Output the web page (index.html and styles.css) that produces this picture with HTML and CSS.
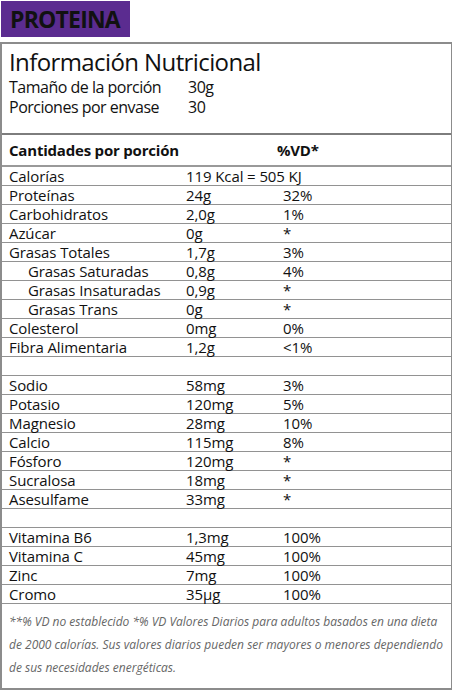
FILE: index.html
```html
<!DOCTYPE html>
<html lang="es">
<head>
    <meta charset="UTF-8">
    <meta name="viewport" content="width=device-width, initial-scale=1.0">
    <title>Proteina - Información Nutricional</title>
    <link rel="stylesheet" href="styles.css">
</head>
<body>
    <div class="product-tag">PROTEINA</div>

    <div class="label">
        <div class="label-head">
            <h1>Información Nutricional</h1>
            <div class="serving"><span>Tamaño de la porción</span><span>30g</span></div>
            <div class="serving"><span>Porciones por envase</span><span>30</span></div>
        </div>

        <div class="row row-header">
            <span>Cantidades por porción</span>
            <span class="vd-head">%VD*</span>
        </div>

        <div class="row"><span>Calorías</span><span class="wide">119 Kcal = 505 KJ</span></div>
        <div class="row"><span>Proteínas</span><span>24g</span><span>32%</span></div>
        <div class="row"><span>Carbohidratos</span><span>2,0g</span><span>1%</span></div>
        <div class="row"><span>Azúcar</span><span>0g</span><span>*</span></div>
        <div class="row"><span>Grasas Totales</span><span>1,7g</span><span>3%</span></div>
        <div class="row sub"><span>Grasas Saturadas</span><span>0,8g</span><span>4%</span></div>
        <div class="row sub"><span>Grasas Insaturadas</span><span>0,9g</span><span>*</span></div>
        <div class="row sub"><span>Grasas Trans</span><span>0g</span><span>*</span></div>
        <div class="row"><span>Colesterol</span><span>0mg</span><span>0%</span></div>
        <div class="row"><span>Fibra Alimentaria</span><span>1,2g</span><span>&lt;1%</span></div>
        <div class="row empty"></div>

        <div class="row"><span>Sodio</span><span>58mg</span><span>3%</span></div>
        <div class="row"><span>Potasio</span><span>120mg</span><span>5%</span></div>
        <div class="row"><span>Magnesio</span><span>28mg</span><span>10%</span></div>
        <div class="row"><span>Calcio</span><span>115mg</span><span>8%</span></div>
        <div class="row"><span>Fósforo</span><span>120mg</span><span>*</span></div>
        <div class="row"><span>Sucralosa</span><span>18mg</span><span>*</span></div>
        <div class="row"><span>Asesulfame</span><span>33mg</span><span>*</span></div>
        <div class="row empty"></div>

        <div class="row"><span>Vitamina B6</span><span>1,3mg</span><span>100%</span></div>
        <div class="row"><span>Vitamina C</span><span>45mg</span><span>100%</span></div>
        <div class="row"><span>Zinc</span><span>7mg</span><span>100%</span></div>
        <div class="row"><span>Cromo</span><span>35µg</span><span>100%</span></div>

        <p class="footnote">**% VD no establecido *% VD Valores Diarios para adultos basados en una dieta de 2000 calorías. Sus valores diarios pueden ser mayores o menores dependiendo de sus necesidades energéticas.</p>
    </div>
</body>
</html>
```

FILE: styles.css
```css
body {
    margin: 0;
    padding: 0;
    background-color: #ffffff;
    font-family: "Open Sans", "Noto Sans", sans-serif;
    color: #111111;
}

.product-tag {
    width: 129px;
    height: 36px;
    margin: 1px 0 0 1px;
    background-color: #5b2c90;
    font-size: 23px;
    font-weight: bold;
    line-height: 36px;
    padding-left: 9px;
    box-sizing: border-box;
    letter-spacing: -0.8px;
}

.label {
    margin-top: 5px;
    width: 452px;
    height: 648px;
    box-sizing: border-box;
    border: 2px solid #8c8c8c;
    border-right-width: 1px;
}

.label-head {
    padding: 3px 7px 0;
    height: 86px;
    border-bottom: 2px solid #7d7d7d;
}

.label-head h1 {
    margin: 0;
    font-size: 24px;
    font-weight: normal;
    line-height: 30px;
    letter-spacing: -0.6px;
}

.serving {
    display: grid;
    grid-template-columns: 179px 1fr;
    font-size: 16px;
    line-height: 20px;
    letter-spacing: -0.5px;
}

.row {
    display: grid;
    grid-template-columns: 177px 97px 1fr;
    height: 19px;
    padding-left: 7px;
    border-bottom: 1px solid #929292;
    font-size: 15px;
    line-height: 18px;
    letter-spacing: -0.1px;
    box-sizing: border-box;
}

.row .wide {
    grid-column: 2 / 4;
}

.row.sub span:first-child {
    padding-left: 19px;
}

.row-header {
    height: 32px;
    line-height: 30px;
    font-weight: bold;
    font-size: 15px;
    letter-spacing: -0.2px;
    border-bottom: 2px solid #999999;
}

.row-header .vd-head {
    grid-column: 3;
    margin-left: -6px;
}

.footnote {
    margin: 0;
    padding: 6px 7px 0;
    font-size: 12px;
    font-style: italic;
    line-height: 23px;
    color: #666666;
}
```
